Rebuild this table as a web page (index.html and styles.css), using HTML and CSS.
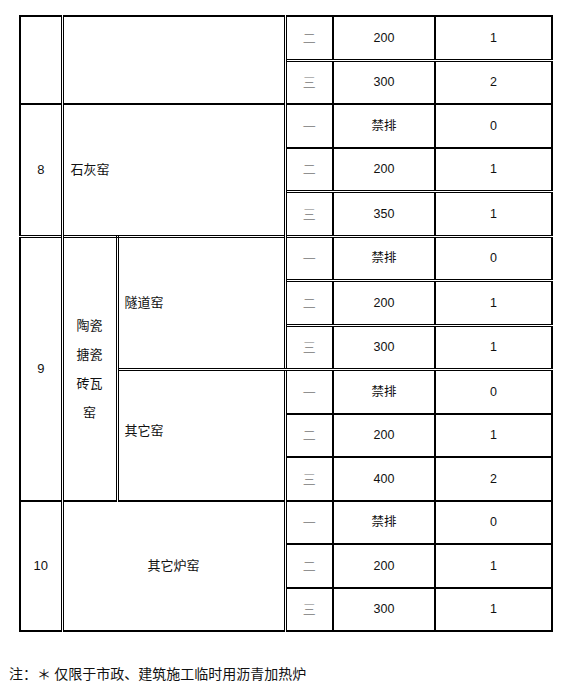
FILE: index.html
```html
<!DOCTYPE html>
<html lang="zh-CN">
<head>
<meta charset="utf-8">
<link rel="stylesheet" href="styles.css">
</head>
<body>
<table class="t">
  <colgroup>
    <col class="w1"><col class="w2"><col class="w3"><col class="w4"><col class="w5"><col class="w6">
  </colgroup>
  <tr class="first">
    <td rowspan="2" class="c1 thin"></td>
    <td rowspan="2" colspan="2" class="thin"></td>
    <td class="lv">二</td><td class="n">200</td><td class="n">1</td>
  </tr>
  <tr class="dt">
    <td class="lv">三</td><td class="n">300</td><td class="n">2</td>
  </tr>
  <tr>
    <td rowspan="3" class="c1">8</td>
    <td rowspan="3" colspan="2" class="left">石灰窑</td>
    <td class="lv">一</td><td class="n">禁排</td><td class="n">0</td>
  </tr>
  <tr>
    <td class="lv">二</td><td class="n">200</td><td class="n">1</td>
  </tr>
  <tr class="dt">
    <td class="lv">三</td><td class="n">350</td><td class="n">1</td>
  </tr>
  <tr class="dt dall">
    <td rowspan="6" class="c1">9</td>
    <td rowspan="6" class="vert">陶瓷<br>搪瓷<br>砖瓦<br>窑</td>
    <td rowspan="3" class="left sub">隧道窑</td>
    <td class="lv">一</td><td class="n">禁排</td><td class="n">0</td>
  </tr>
  <tr class="dt">
    <td class="lv">二</td><td class="n">200</td><td class="n">1</td>
  </tr>
  <tr class="dt">
    <td class="lv">三</td><td class="n">300</td><td class="n">1</td>
  </tr>
  <tr class="dt">
    <td rowspan="3" class="left sub2">其它窑</td>
    <td class="lv">一</td><td class="n">禁排</td><td class="n">0</td>
  </tr>
  <tr>
    <td class="lv">二</td><td class="n">200</td><td class="n">1</td>
  </tr>
  <tr>
    <td class="lv">三</td><td class="n">400</td><td class="n">2</td>
  </tr>
  <tr>
    <td rowspan="3" class="c1">10</td>
    <td rowspan="3" colspan="2">其它炉窑</td>
    <td class="lv">一</td><td class="n">禁排</td><td class="n">0</td>
  </tr>
  <tr>
    <td class="lv">二</td><td class="n">200</td><td class="n">1</td>
  </tr>
  <tr>
    <td class="lv">三</td><td class="n">300</td><td class="n">1</td>
  </tr>
</table>
<p class="note">注：＊ 仅限于市政、建筑施工临时用沥青加热炉</p>
</body>
</html>
```

FILE: styles.css
```css
html, body {
  margin: 0;
  padding: 0;
  background: #fff;
}
body {
  color: #111;
  font-family: "Liberation Sans", "Noto Sans CJK SC", sans-serif;
}
.t {
  border-collapse: collapse;
  table-layout: fixed;
  margin: 15px 0 0 19px;
  width: 534px;
  font-size: 13px;
}
.w1 { width: 42px; }
.w2 { width: 55px; }
.w3 { width: 168px; }
.w4 { width: 48px; }
.w5 { width: 102px; }
.w6 { width: 117px; }
.t td {
  border: 2px solid #000;
  height: 41.5px;
  padding: 0;
  text-align: center;
  vertical-align: middle;
  line-height: 16px;
}
.t td.c1 { border-right: 3px double #000; }
.t td.lv {
  border-left: 3px double #000;
  color: #777;
  font-family: "Noto Sans CJK SC", sans-serif;
  font-weight: 300;
}
.t td.n { font-size: 12.5px; }
.t tr.first td { border-top-width: 2px; }
.t td.thin { border-top: 1px solid #000; }
.t tr.dt td.lv,
.t tr.dt td.n { border-top: 3px double #000; }
.t tr.dall td { border-top: 3px double #000; }
.t td.left {
  text-align: left;
  padding-left: 7px;
}
.t td.vert {
  border-right: 3px double #000;
  line-height: 29px;
}
.t td.sub { border-bottom: 3px double #000; padding-left: 6px; }
.t td.sub2 { padding-left: 6px; padding-bottom: 8px; }
.note {
  margin: 31px 0 0 9px;
  font-family: "Noto Sans CJK SC", sans-serif;
  font-size: 14px;
  color: #111;
  line-height: 20px;
}
```
